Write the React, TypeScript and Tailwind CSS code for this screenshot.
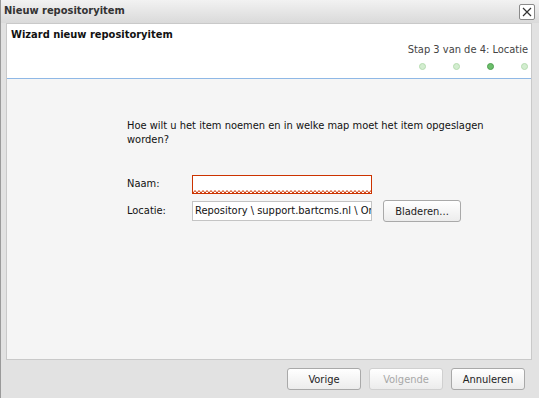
import React from "react"

const Dot = ({ active }: { active?: boolean }) => (
  <span
    className={`block h-[7px] w-[7px] rounded-full border ${
      active ? "border-[#4f9f4f] bg-[#6cbf6c]" : "border-[#b5dcb0] bg-[#d3edd0]"
    }`}
  />
)

const Btn = ({ children, disabled, className = "" }: { children: React.ReactNode; disabled?: boolean; className?: string }) => (
  <button
    className={`h-[22px] rounded-[3px] border bg-gradient-to-b from-white to-[#ececec] text-[11px] leading-none ${
      disabled ? "border-[#d0d0d0] text-[#a8a8a8]" : "border-[#a9a9a9] text-[#222]"
    } ${className}`}
  >
    {children}
  </button>
)

export default function App() {
  return (
    <div
      className="relative flex h-[398px] w-[539px] flex-col overflow-hidden border-l border-[#9a9a9a] bg-[#e2e2e2] text-[11px] text-[#111]"
      style={{ fontFamily: "'DejaVu Sans Condensed', 'Liberation Sans', sans-serif" }}
    >
      {/* title bar */}
      <div className="relative flex h-[23px] items-center bg-gradient-to-b from-[#f2f2f2] to-[#dadada] pl-[3px]">
        <span className="text-[11px] font-bold text-[#333]">Nieuw repositoryitem</span>
        <button className="absolute right-[4px] top-[4px] flex h-[16px] w-[16px] items-center justify-center rounded-[2px] border border-[#8a8a8a] bg-white">
          <svg width="10" height="10" viewBox="0 0 10 10">
            <path d="M1 1 L9 9 M9 1 L1 9" stroke="#333" strokeWidth="1.2" />
          </svg>
        </button>
      </div>

      <div className="flex pl-[5px] pr-[7px]">
        <div className="flex h-[337px] w-full flex-col border border-[#c9c9c9] bg-[#f5f5f5]">
          {/* header */}
          <div className="flex h-[55px] shrink-0 flex-col border-b border-[#8fb8e6] bg-white">
            <div className="pl-[4px] pt-[4px] text-[11px] font-bold leading-[14px]">Wizard nieuw repositoryitem</div>
            <div className="mt-[1px] self-end pr-[3px] text-[11px] leading-[14px] text-[#444]">Stap 3 van de 4: Locatie</div>
            <div className="mt-[6px] flex justify-end gap-[27px] pr-[3px]">
              <Dot />
              <Dot />
              <Dot active />
              <Dot />
            </div>
          </div>

          {/* body */}
          <div className="pl-[120px] pt-[40px]">
            <p className="w-[372px] leading-[14px]">
              Hoe wilt u het item noemen en in welke map moet het item opgeslagen worden?
            </p>
            <div className="mt-[28px] flex items-center">
              <span className="w-[65px]">Naam:</span>
              <div className="relative h-[19px] w-[180px] border border-[#cc3300] bg-white">
                <svg className="absolute bottom-0 left-0" width="178" height="3">
                  <defs>
                    <pattern id="zz" width="4" height="3" patternUnits="userSpaceOnUse">
                      <path d="M0 3 L2 0.5 L4 3" fill="none" stroke="#cc3300" strokeWidth="1" />
                    </pattern>
                  </defs>
                  <rect width="178" height="3" fill="url(#zz)" />
                </svg>
              </div>
            </div>
            <div className="mt-[6px] flex items-center">
              <span className="w-[65px]">Locatie:</span>
              <div className="flex h-[20px] w-[180px] items-center overflow-hidden whitespace-nowrap border border-[#c4c4c4] bg-white pl-[2px]">
                Repository \ support.bartcms.nl \ Or
              </div>
              <Btn className="ml-[11px] w-[78px]">Bladeren...</Btn>
            </div>
          </div>
        </div>
      </div>

      {/* footer */}
      <div className="flex justify-end gap-[8px] pr-[14px] pt-[8px]">
        <Btn className="w-[74px]">Vorige</Btn>
        <Btn disabled className="w-[74px]">Volgende</Btn>
        <Btn className="w-[74px]">Annuleren</Btn>
      </div>
    </div>
  )
}
